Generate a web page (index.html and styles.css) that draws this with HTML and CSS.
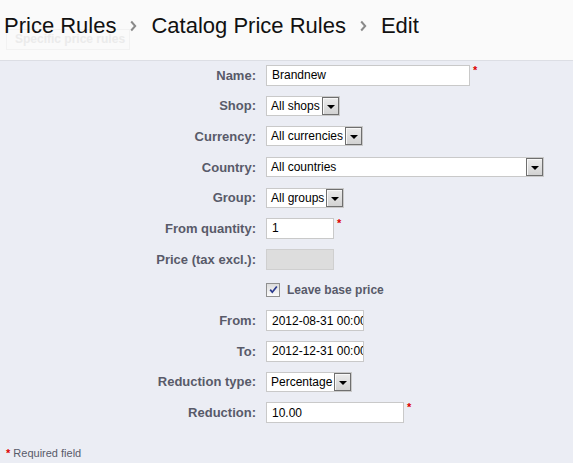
FILE: index.html
```html
<!DOCTYPE html>
<html>
<head>
<meta charset="utf-8">
<link rel="stylesheet" href="styles.css">
</head>
<body>
<div class="toolbar">
  <div class="ghost-tab">Specific price rules</div>
  <h1 class="crumbs">
    <span>Price Rules</span>
    <svg class="chev" width="7" height="12" viewBox="0 0 7 12"><path d="M1.2 1.5 L5.2 6 L1.2 10.5" fill="none" stroke="#8a8a8a" stroke-width="2"/></svg>
    <span>Catalog Price Rules</span>
    <svg class="chev" width="7" height="12" viewBox="0 0 7 12"><path d="M1.2 1.5 L5.2 6 L1.2 10.5" fill="none" stroke="#8a8a8a" stroke-width="2"/></svg>
    <span>Edit</span>
  </h1>
</div>
<div class="form">
  <div class="rows">
    <div class="row">
      <label class="lbl">Name:</label>
      <div class="field"><input class="txt w-name" type="text" value="Brandnew"><span class="req">*</span></div>
    </div>
    <div class="row">
      <label class="lbl">Shop:</label>
      <div class="field"><span class="sel w-shop"><span class="sel-text">All shops</span><span class="arrow"></span></span></div>
    </div>
    <div class="row">
      <label class="lbl">Currency:</label>
      <div class="field"><span class="sel w-cur"><span class="sel-text">All currencies</span><span class="arrow"></span></span></div>
    </div>
    <div class="row">
      <label class="lbl">Country:</label>
      <div class="field"><span class="sel w-country"><span class="sel-text">All countries</span><span class="arrow"></span></span></div>
    </div>
    <div class="row">
      <label class="lbl">Group:</label>
      <div class="field"><span class="sel w-group"><span class="sel-text">All groups</span><span class="arrow"></span></span></div>
    </div>
    <div class="row">
      <label class="lbl">From quantity:</label>
      <div class="field"><input class="txt w-qty" type="text" value="1"><span class="req">*</span></div>
    </div>
    <div class="row">
      <label class="lbl">Price (tax excl.):</label>
      <div class="field"><input class="txt w-qty disabled" type="text" value="" disabled></div>
    </div>
    <div class="row">
      <span class="lbl"></span>
      <div class="field check-field">
        <span class="cbox"><svg width="11" height="11" viewBox="0 0 11 11"><path d="M2.2 5.6 L4.3 8.2 L8.8 2.4" fill="none" stroke="#2a3a8f" stroke-width="1.7"/></svg></span>
        <span class="check-label">Leave base price</span>
      </div>
    </div>
    <div class="row">
      <label class="lbl">From:</label>
      <div class="field"><input class="txt w-date" type="text" value="2012-08-31 00:00:00"></div>
    </div>
    <div class="row">
      <label class="lbl">To:</label>
      <div class="field"><input class="txt w-date" type="text" value="2012-12-31 00:00:00"></div>
    </div>
    <div class="row">
      <label class="lbl">Reduction type:</label>
      <div class="field"><span class="sel w-type"><span class="sel-text">Percentage</span><span class="arrow"></span></span></div>
    </div>
    <div class="row">
      <label class="lbl">Reduction:</label>
      <div class="field"><input class="txt w-red" type="text" value="10.00"><span class="req">*</span></div>
    </div>
  </div>
  <p class="note"><span class="req-note">*</span> Required field</p>
</div>
</body>
</html>
```

FILE: styles.css
```css
html, body {
  margin: 0;
  padding: 0;
}
body {
  width: 573px;
  height: 463px;
  overflow: hidden;
  background: #ebedf4;
  font-family: "Liberation Sans", Arial, sans-serif;
}
.toolbar {
  position: relative;
  height: 61px;
  box-sizing: border-box;
  background: #fafafa;
  border-bottom: 1px solid #dcdee4;
}
.ghost-tab {
  position: absolute;
  left: 6px;
  top: 29px;
  width: 124px;
  height: 21px;
  box-sizing: border-box;
  border: 1px solid #f2f2f2;
  color: #ebebeb;
  font-size: 12px;
  font-weight: bold;
  line-height: 19px;
  padding-left: 8px;
  white-space: nowrap;
}
.crumbs {
  position: relative;
  margin: 0;
  padding: 13px 0 0 4px;
  display: flex;
  align-items: center;
  font-size: 22px;
  font-weight: normal;
  line-height: 26px;
  color: #111;
  white-space: nowrap;
}
.chev {
  margin: 0 14px 0 14px;
}
.rows {
  margin-top: -1.35px;
}
.row {
  height: 30.7px;
  display: grid;
  grid-template-columns: 256px 1fr;
  column-gap: 10px;
  align-items: center;
}
.lbl {
  text-align: right;
  font-size: 13px;
  font-weight: bold;
  color: #585a69;
  white-space: nowrap;
}
.field {
  display: flex;
  align-items: center;
}
.txt {
  height: 21px;
  box-sizing: border-box;
  margin: 0;
  border: 1px solid #c9c9c9;
  background: #fff;
  padding: 0 0 0 5px;
  font-family: "Liberation Sans", Arial, sans-serif;
  font-size: 12px;
  color: #000;
  outline: none;
}
.txt.disabled {
  background: #dddddd;
  border-color: #cfcfcf;
}
.w-name { width: 204px; }
.w-qty { width: 68px; }
.w-date { width: 98px; }
.w-red { width: 138px; }
.req {
  align-self: flex-start;
  margin: 0 0 0 3px;
  color: #dd0000;
  font-size: 11px;
  font-weight: bold;
  line-height: 11px;
}
.sel {
  height: 20px;
  box-sizing: border-box;
  display: flex;
  align-items: stretch;
  border: 1px solid #c9c9c9;
  background: #fff;
  font-size: 12px;
  color: #000;
}
.sel-text {
  flex: 1;
  padding-left: 4px;
  line-height: 18px;
  white-space: nowrap;
  overflow: hidden;
}
.arrow {
  width: 17px;
  box-sizing: border-box;
  border: 1px solid #6f6f6f;
  background: linear-gradient(#ececec, #d2d2d2);
  box-shadow: inset 1px 1px 0 #f8f8f8;
  position: relative;
}
.arrow::after {
  content: "";
  position: absolute;
  left: 4px;
  top: 7px;
  border-left: 4px solid transparent;
  border-right: 4px solid transparent;
  border-top: 4px solid #000;
}
.w-shop { width: 74px; }
.w-cur { width: 97px; }
.w-country { width: 278px; }
.w-group { width: 78px; }
.w-type { width: 86px; }
.check-field {
  gap: 7px;
}
.cbox {
  width: 14px;
  height: 14px;
  box-sizing: border-box;
  border: 1px solid #8f8f8f;
  background: linear-gradient(#dcdcdc, #fbfbfb);
  display: flex;
  align-items: center;
  justify-content: center;
}
.cbox svg { display: block; }
.check-label {
  font-size: 12px;
  font-weight: bold;
  color: #585a69;
}
.note {
  margin: 18px 0 0 6px;
  font-size: 11px;
  color: #585a69;
  line-height: 14px;
}
.req-note {
  color: #dd0000;
  font-weight: bold;
}
```
